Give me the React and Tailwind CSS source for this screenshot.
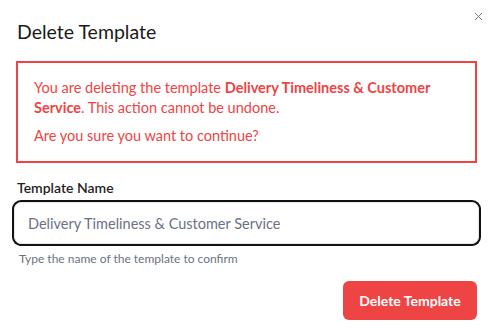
import React from 'react';
import { X } from 'lucide-react';

function App() {
  const name = 'Delivery Timeliness & Customer Service';

  return (
    <div
      className="relative w-[491px] h-[334px] bg-white pl-4 pr-[14px] pt-[18px] text-gray-900"
      style={{ fontFamily: '"Segoe UI", Lato, "Noto Sans", sans-serif' }}
    >
      <button className="absolute top-[8px] right-[4px] p-[2px] text-gray-500">
        <X className="w-[13px] h-[13px]" strokeWidth={1.75} />
      </button>

      <h2 className="text-[19.5px] leading-[28px] font-normal text-[#1a1a1a] pl-px">Delete Template</h2>

      <div className="mt-[15px] border-2 border-[#ef4444] pl-4 pr-3 pt-[15px] pb-[15px] text-[14.5px] leading-[20px] text-[#ef4444]">
        <p>
          You are deleting the template <span className="font-bold">{name}</span>. This action cannot be undone.
        </p>
        <p className="mt-2">Are you sure you want to continue?</p>
      </div>

      <label className="block mt-[15px] pl-px text-[14px] leading-[20px] font-semibold text-[#1f1f1f]">
        Template Name
      </label>

      <input
        type="text"
        placeholder={name}
        className="mt-[4px] -ml-[2px] block w-[calc(100%+4px)] h-[42px] rounded-[7px] border border-gray-200 bg-white px-[13px] text-[14.5px] text-gray-900 placeholder:text-gray-500 shadow-[0_0_0_2px_#111] outline-none"
      />

      <p className="mt-[7px] pl-[3px] text-[12px] leading-[16px] text-gray-500">
        Type the name of the template to confirm
      </p>

      <div className="mt-[14px] flex justify-end">
        <button className="h-[39px] w-[134px] rounded-md bg-[#ef4444] text-white text-[14px] font-bold">
          Delete Template
        </button>
      </div>
    </div>
  );
}

export default App;
